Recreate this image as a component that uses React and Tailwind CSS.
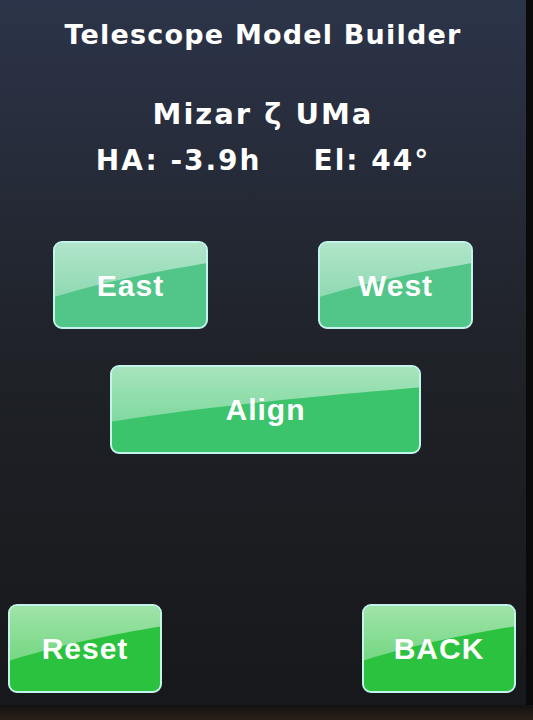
import React from 'react'

function GlossButton({ label, tone, className }) {
  const tones = {
    mint: 'bg-[#52c589]',
    mid: 'bg-[#3cc46c]',
    green: 'bg-[#2bc240]',
  }
  const id = `gloss-${label}`
  return (
    <div
      className={`relative overflow-hidden rounded-[9px] border-2 border-[#c4f3ec] ${tones[tone]} ${className}`}
    >
      <svg
        className="absolute inset-0 w-full h-full"
        viewBox="0 0 100 100"
        preserveAspectRatio="none"
      >
        <defs>
          <linearGradient id={id} x1="0" y1="0" x2="0" y2="1">
            <stop offset="0" stopColor="#ffffff" stopOpacity="0.55" />
            <stop offset="1" stopColor="#ffffff" stopOpacity="0.35" />
          </linearGradient>
        </defs>
        <path d="M0 0 H100 V24 C80 30 40 42 0 64 Z" fill={`url(#${id})`} />
      </svg>
      <div className="relative flex h-full items-center justify-center font-['Liberation_Sans',Arial,sans-serif] text-[30px] font-bold tracking-[1px] text-white">
        {label}
      </div>
    </div>
  )
}

export default function App() {
  return (
    <div className="flex h-[720px] w-[533px] flex-col bg-[#0c0c0d]">
      <div className="flex flex-1">
        <div className="flex flex-1 flex-col bg-gradient-to-b from-[#2c3449] via-[#1f2228] to-[#17181b] font-['DejaVu_Sans',sans-serif] font-bold text-white">
          <div className="pt-[20px] text-center text-[27px] leading-[30px] tracking-[1.2px]">
            Telescope Model Builder
          </div>
          <div className="mt-[48px] text-center text-[29px] leading-[32px] tracking-[2px]">
            Mizar ζ UMa
          </div>
          <div className="mt-[15px] flex justify-center gap-[52px] text-[28px] leading-[32px] tracking-[2px]">
            <span>HA: -3.9h</span>
            <span>El: 44°</span>
          </div>

          <div className="mt-[64px] flex justify-between pl-[53px] pr-[53px]">
            <GlossButton label="East" tone="mint" className="h-[88px] w-[155px]" />
            <GlossButton label="West" tone="mint" className="h-[88px] w-[155px]" />
          </div>
          <div className="mt-[36px] flex pl-[110px]">
            <GlossButton label="Align" tone="mid" className="h-[89px] w-[311px]" />
          </div>

          <div className="mt-auto mb-[12px] flex justify-between pl-[8px] pr-[10px]">
            <GlossButton label="Reset" tone="green" className="h-[89px] w-[154px]" />
            <GlossButton label="BACK" tone="green" className="h-[89px] w-[154px]" />
          </div>
        </div>
        <div className="w-[7px] bg-[#0a0a0a]" />
      </div>
      <div className="h-[15px] bg-gradient-to-b from-[#121212] to-[#2a2017]" />
    </div>
  )
}
